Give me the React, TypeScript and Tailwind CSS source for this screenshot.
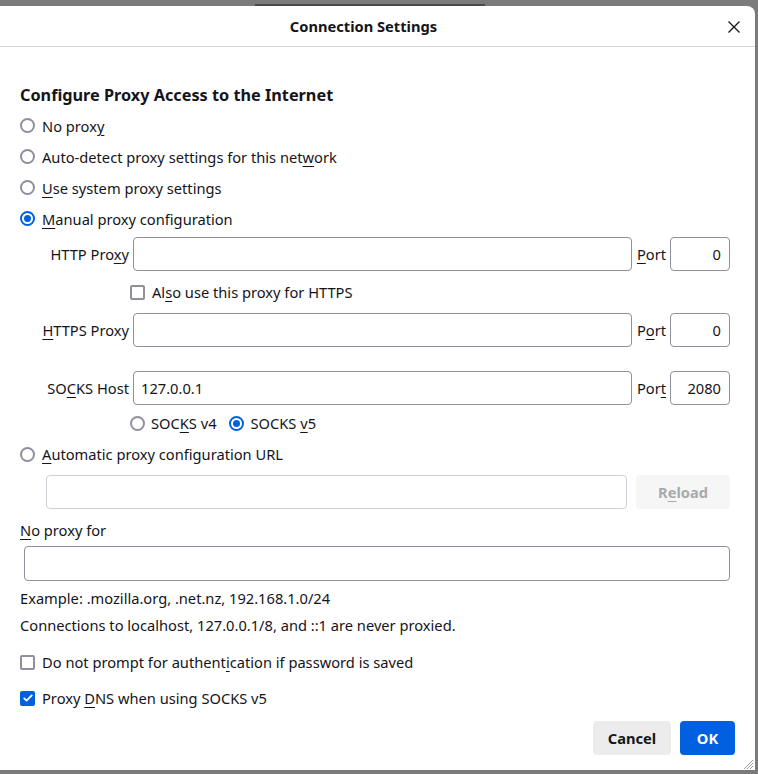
import type { ReactNode } from 'react';

const FONT = { fontFamily: '"Noto Sans", "Open Sans", sans-serif' };

function K({ children }: { children: ReactNode }) {
  return <span className="underline underline-offset-[3px] decoration-[1px]">{children}</span>;
}

function Radio({ checked = false }: { checked?: boolean }) {
  return (
    <span
      className={`flex h-[15px] w-[15px] shrink-0 items-center justify-center rounded-full border-2 bg-white ${
        checked ? 'border-[#0061e0]' : 'border-[#8f8f9d]'
      }`}
    >
      {checked && <span className="h-[7px] w-[7px] rounded-full bg-[#0061e0]" />}
    </span>
  );
}

function Check({ checked = false }: { checked?: boolean }) {
  if (checked) {
    return (
      <span className="flex h-[15px] w-[15px] shrink-0 items-center justify-center rounded-[2px] bg-[#0061e0]">
        <svg viewBox="0 0 16 16" className="h-[12px] w-[12px]" fill="none" stroke="white" strokeWidth="2.4">
          <path d="M3 8.5l3 3 7-7" strokeLinecap="round" strokeLinejoin="round" />
        </svg>
      </span>
    );
  }
  return <span className="h-[15px] w-[15px] shrink-0 rounded-[2px] border-2 border-[#8f8f9d] bg-white" />;
}

function Row({ children, className = '' }: { children: ReactNode; className?: string }) {
  return <div className={`flex h-[20px] items-center gap-[7px] ${className}`}>{children}</div>;
}

function ProxyRow({
  label,
  value,
  port,
  portValue,
  className = '',
}: {
  label: ReactNode;
  value?: string;
  port: ReactNode;
  portValue: string;
  className?: string;
}) {
  return (
    <div className={`flex h-[34px] items-stretch ${className}`}>
      <div className="flex w-[109px] items-center justify-end">
        <span>{label}</span>
      </div>
      <div className="ml-[4px] flex flex-1 items-center rounded-[4px] border border-[#8f8f9d] px-[7px]">{value}</div>
      <div className="ml-[5px] flex items-center">
        <span>{port}</span>
      </div>
      <div className="ml-[4px] flex w-[60px] items-center justify-end rounded-[4px] border border-[#8f8f9d] px-[8px]">
        {portValue}
      </div>
    </div>
  );
}

export default function App() {
  return (
    <div className="relative h-[774px] w-[758px] overflow-hidden bg-[#7b7b7b] text-[14.67px] text-[#15141a]" style={FONT}>
      <div className="absolute left-[255px] top-[4px] h-[2px] w-[230px] bg-[#4a4a4a]" />
      <div className="mt-[6px] flex h-[764px] w-[755px] flex-col rounded-tr-[8px] bg-white">
        <div className="relative flex h-[41px] shrink-0 items-center justify-center border-b border-[#d7d7db] pr-[28px]">
          <span className="font-bold">Connection Settings</span>
          <svg viewBox="0 0 12 12" className="absolute right-[15px] top-[15px] h-[12px] w-[12px]" stroke="#15141a" strokeWidth="1.3">
            <path d="M0.5 0.5l11 11M11.5 0.5l-11 11" />
          </svg>
        </div>

        <div className="flex flex-col pl-[20px] pr-[25px]">
          <div className="mt-[36px] flex h-[24px] items-center text-[16.25px] font-bold">Configure Proxy Access to the Internet</div>

          <div className="mt-[3px] flex h-[31px] items-center gap-[7px]">
            <Radio />
            <span>
              No prox<K>y</K>
            </span>
          </div>
          <div className="flex h-[31px] items-center gap-[7px]">
            <Radio />
            <span>
              Auto-detect proxy settings for this net<K>w</K>ork
            </span>
          </div>
          <div className="flex h-[31px] items-center gap-[7px]">
            <Radio />
            <span>
              <K>U</K>se system proxy settings
            </span>
          </div>
          <div className="flex h-[31px] items-center gap-[7px]">
            <Radio checked />
            <span>
              <K>M</K>anual proxy configuration
            </span>
          </div>

          <ProxyRow
            className="mt-[3px]"
            label={
              <>
                HTTP Pro<K>x</K>y
              </>
            }
            port={
              <>
                <K>P</K>ort
              </>
            }
            portValue="0"
          />

          <Row className="ml-[110px] mt-[11px]">
            <Check />
            <span>
              Al<K>s</K>o use this proxy for HTTPS
            </span>
          </Row>

          <ProxyRow
            className="mt-[11px]"
            label={
              <>
                <K>H</K>TTPS Proxy
              </>
            }
            port={
              <>
                P<K>o</K>rt
              </>
            }
            portValue="0"
          />

          <ProxyRow
            className="mt-[24px]"
            label={
              <>
                SO<K>C</K>KS Host
              </>
            }
            value="127.0.0.1"
            port={
              <>
                Por<K>t</K>
              </>
            }
            portValue="2080"
          />

          <div className="ml-[110px] mt-[8px] flex h-[20px] items-center">
            <Radio />
            <span className="ml-[6px]">
              SOC<K>K</K>S v4
            </span>
            <span className="ml-[12px]">
              <Radio checked />
            </span>
            <span className="ml-[7px]">
              SOCKS <K>v</K>5
            </span>
          </div>

          <Row className="mt-[11px]">
            <Radio />
            <span>
              <K>A</K>utomatic proxy configuration URL
            </span>
          </Row>

          <div className="ml-[26px] mt-[11px] flex h-[34px] items-stretch gap-[9px]">
            <div className="flex-1 rounded-[4px] border border-[#cfcfd8]" />
            <div className="flex w-[94px] items-center justify-center rounded-[4px] bg-[#f6f6f6] font-bold text-[#a9a9ae]">
              <span>
                R<K>e</K>load
              </span>
            </div>
          </div>

          <Row className="mt-[11px]">
            <span>
              <K>N</K>o proxy for
            </span>
          </Row>

          <div className="ml-[4px] mt-[6px] h-[35px] rounded-[4px] border border-[#8f8f9d]" />

          <Row className="mt-[7px]">
            <span>Example: .mozilla.org, .net.nz, 192.168.1.0/24</span>
          </Row>
          <Row className="mt-[7px]">
            <span>Connections to localhost, 127.0.0.1/8, and ::1 are never proxied.</span>
          </Row>

          <Row className="mt-[17px]">
            <Check />
            <span>
              Do not prompt for authent<K>i</K>cation if password is saved
            </span>
          </Row>
          <Row className="mt-[16px]">
            <Check checked />
            <span>
              Proxy <K>D</K>NS when using SOCKS v5
            </span>
          </Row>

          <div className="-mr-[5px] mt-[13px] flex h-[34px] justify-end gap-[9px]">
            <button className="w-[78px] rounded-[4px] bg-[#ececec] font-bold text-[#15141a]">Cancel</button>
            <button className="w-[55px] rounded-[4px] bg-[#0060df] font-bold text-white">OK</button>
          </div>
        </div>
      </div>
      <svg viewBox="0 0 10 10" className="absolute left-[743px] top-[759px] h-[10px] w-[10px]" stroke="#9a9a9a" strokeWidth="1">
        <path d="M10 1L1 10M10 4L4 10M10 7L7 10" />
      </svg>
    </div>
  );
}
